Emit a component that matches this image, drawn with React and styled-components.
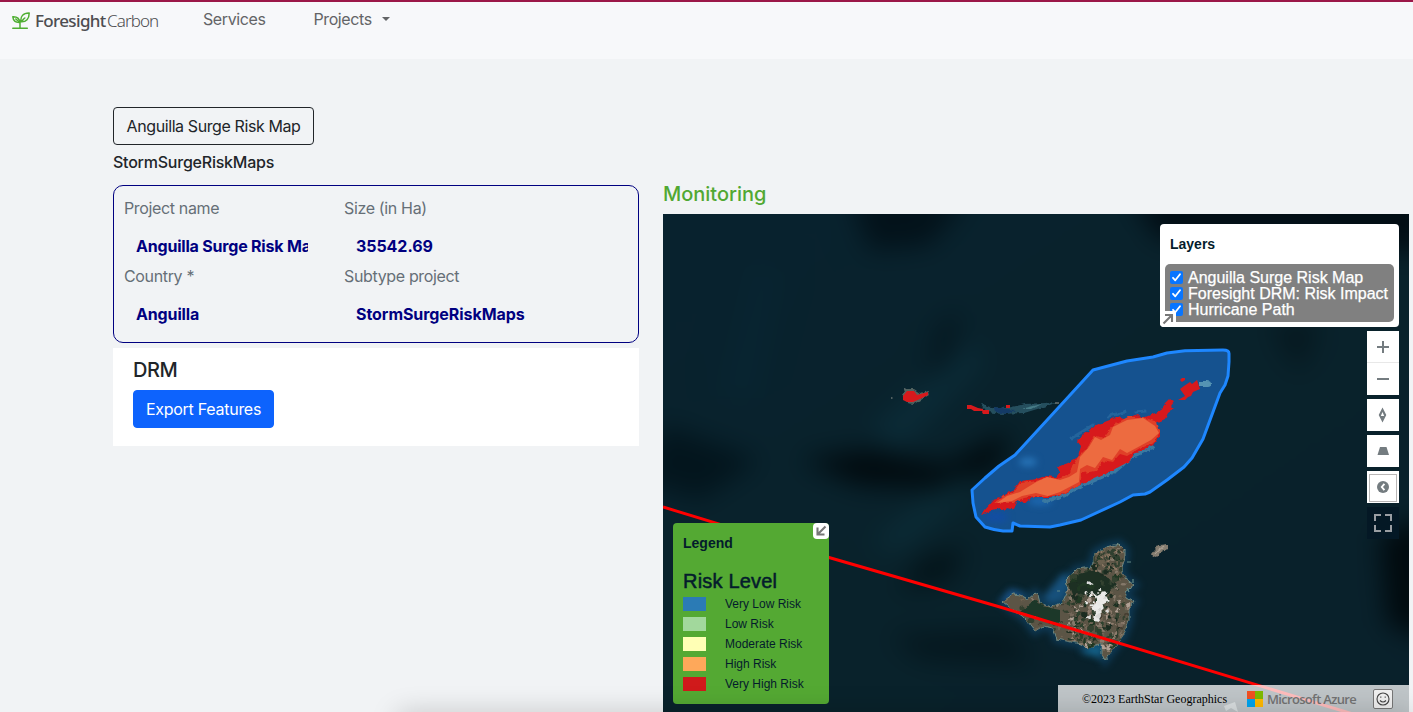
import React from "react";
import styled, { createGlobalStyle } from "styled-components";

const Global = createGlobalStyle`
  * { box-sizing: border-box; }
  html, body { margin: 0; height: 100%; overflow: hidden; }
  body {
    background: #f1f3f5;
    color: #212529;
    font: 400 16px/24px Inter, "Liberation Sans", sans-serif;
  }
`;

const Page = styled.div`
  position: relative;
  height: 712px;
  overflow: hidden;
`;

const Navbar = styled.header`
  display: flex;
  align-items: flex-start;
  height: 59px;
  border-top: 2px solid #9b1748;
  background: #f7f8fa;
  padding: 5px 12px 0;
`;

const Brand = styled.div`
  display: flex;
  align-items: center;
  width: 191px;
  height: 28px;
  font-family: "Noto Sans", sans-serif;
  font-size: 17px;
  color: #4d4d50;
`;

const BrandText = styled.span`
  display: inline-block;
  width: ${(p) => p.$w}px;
  margin-left: ${(p) => p.$ml}px;
  font-weight: ${(p) => p.$weight};
  letter-spacing: ${(p) => p.$ls}px;
  white-space: nowrap;
`;

const NavLink = styled.a`
  display: flex;
  align-items: center;
  margin-right: 48px;
  color: #636466;
  letter-spacing: -0.4px;
  white-space: nowrap;
`;

const Caret = styled.span`
  margin-left: 10px;
  border: 4px solid transparent;
  border-top-color: #636466;
  border-bottom: 0;
`;

const Main = styled.main`
  padding: 48px 4px 0 113px;
`;

const Button = styled.button`
  display: block;
  height: 38px;
  width: ${(p) => p.$w}px;
  padding: 0;
  border: 1px solid ${(p) => (p.$primary ? "#0d63fd" : "#212529")};
  border-radius: 4px;
  background: ${(p) => (p.$primary ? "#0d63fd" : "transparent")};
  color: ${(p) => (p.$primary ? "#fff" : "#212529")};
  font: inherit;
  letter-spacing: ${(p) => p.$ls}px;
  white-space: nowrap;
`;

const ProjectType = styled.div`
  margin-top: 5px;
  font-weight: 500;
  letter-spacing: -0.23px;
`;

const Columns = styled.div`
  display: flex;
  gap: 24px;
  align-items: flex-start;
  margin-top: 8px;
`;

const Left = styled.section`
  flex: 0 0 526px;
  padding-top: 3px;
`;

const Right = styled.section`
  flex: 1;
`;

const DetailCard = styled.div`
  display: grid;
  grid-template-columns: 220px 1fr;
  grid-auto-rows: 68px;
  height: 158px;
  padding: 10px;
  border: 1px solid #000080;
  border-radius: 10px;
`;

const Label = styled.div`
  color: #666f77;
  letter-spacing: -0.35px;
`;

const Value = styled.div`
  width: ${(p) => p.$w || 196}px;
  margin: 14px 0 0 12px;
  overflow: hidden;
  white-space: nowrap;
  color: #000080;
  font-weight: 700;
  letter-spacing: ${(p) => p.$ls}px;
`;

const DrmCard = styled.div`
  height: 98px;
  margin-top: 5px;
  padding: 10px 20px;
  background: #fff;
`;

const Heading = styled.h5`
  margin: 0 0 8px;
  font-size: 20px;
  line-height: 24px;
  font-weight: 500;
  letter-spacing: ${(p) => p.$ls}px;
  color: ${(p) => p.$color || "#212529"};
`;

const MapFrame = styled.div`
  position: relative;
  height: 498px;
  overflow: hidden;
  background: #08202b;
  font-family: "Liberation Sans", sans-serif;
`;

const Scene = styled.svg`
  display: block;
  width: 746px;
  height: 498px;

  filter { color-interpolation-filters: sRGB; }
`;

const LayersPanel = styled.div`
  position: absolute;
  top: 10px;
  right: 10px;
  width: 239px;
  height: 103px;
  padding: 10px 5px 5px;
  border-radius: 4px;
  background: #fff;
  color: #041c2c;
`;

const PanelTitle = styled.div`
  height: 30px;
  padding-left: 5px;
  font: 700 14px/20px "Liberation Sans", sans-serif;
`;

const LayerList = styled.div`
  height: 58px;
  padding: 5px;
  border-radius: 5px;
  background: #808080;
  color: #fff;
`;

const LayerRow = styled.label`
  display: flex;
  align-items: center;
  height: 16px;
  gap: 5px;
  font-size: 16px;
  line-height: 16px;
  white-space: nowrap;
`;

const LayerName = styled.span`
  padding-top: 2px;
  -webkit-text-stroke: 0.25px #fff;
`;

const CheckIcon = styled.svg`
  flex: none;
  width: 13px;
  height: 13px;
`;

const Toggle = styled.button`
  position: absolute;
  ${(p) => (p.$corner === "top" ? "top: 0; right: 0;" : "bottom: 0; left: 0;")}
  display: grid;
  place-items: center;
  width: 16px;
  height: 16px;
  padding: 0;
  border: 0;
  border-radius: ${(p) => (p.$corner === "top" ? "4px" : "0 0 0 4px")};
  background: #fff;
`;

const Controls = styled.div`
  position: absolute;
  top: 117px;
  right: 10px;
  display: flex;
  flex-direction: column;
  gap: 4px;
`;

const ControlGroup = styled.div`
  background: ${(p) => (p.$dark ? "#041825" : "#fff")};
`;

const Control = styled.button`
  display: block;
  width: 32px;
  height: 32px;
  padding: 0;
  border: 0;
  border-bottom: ${(p) => (p.$divided ? "1px solid #e8e8e8" : "0")};
  background: transparent;

  svg { display: block; width: 32px; height: 32px; }
`;

const Legend = styled.div`
  position: absolute;
  left: 10px;
  bottom: 8px;
  width: 156px;
  height: 181px;
  padding: 10px 5px;
  border-radius: 4px;
  background: #54a933;
  color: #041c2c;
`;

const LegendHeading = styled.div`
  margin: 6px 0 1px;
  padding-left: 5px;
  font-size: 20px;
  line-height: 24px;
  -webkit-text-stroke: 0.5px #041c2c;
  letter-spacing: 0.2px;
`;

const LegendRow = styled.div`
  display: flex;
  align-items: center;
  height: 20px;
  padding-left: 5px;
  font-size: 12px;
  line-height: 20px;
`;

const Swatch = styled.span`
  width: 23px;
  height: 14px;
  margin-right: 19px;
  background: ${(p) => p.$color};
`;

const Attribution = styled.div`
  position: absolute;
  right: 0;
  bottom: 0;
  display: flex;
  align-items: center;
  width: 351px;
  height: 27px;
  padding-left: 24px;
  background: rgba(255, 255, 255, 0.74);
`;

const Copyright = styled.span`
  width: 165px;
  font: 12px/16px "Liberation Serif", serif;
  color: #000;
  white-space: nowrap;
`;

const MsLogo = styled.span`
  display: grid;
  grid-template-columns: 8px 8px;
  grid-auto-rows: 8px;
  width: 16px;
`;

const Tile = styled.span`
  background: ${(p) => p.$color};
`;

const Azure = styled.span`
  width: 106px;
  margin-left: 4px;
  font: 600 13px/18px "Open Sans", sans-serif;
  letter-spacing: -0.68px;
  color: #737373;
  white-space: nowrap;
`;

const Smile = styled.span`
  display: grid;
  place-items: center;
  width: 20px;
  height: 20px;
  border: 1px solid #777;
  border-radius: 2px;
  background: #f0f0f0;
`;

const BottomShade = styled.div`
  position: absolute;
  left: 398px;
  right: 0;
  top: 712px;
  height: 20px;
  box-shadow: 0 2px 28px rgba(0, 0, 0, 0.22);
  pointer-events: none;
`;

function Sprout() {
  return (
    <svg width="18" height="18" viewBox="0 0 18 18" fill="none" stroke="#4fae32" strokeWidth="1.5" strokeLinecap="round" strokeLinejoin="round">
      <path d="M.8 16.2h14.5M8 16V10.5M8 10.5C3.8 10.7 1.2 8.7.8 4.7C4.5 4.5 7.4 6.5 8 10.5ZM9 9.8C8.2 4.5 11 .9 17.2 1C17.2 6.8 14.2 10.2 9 9.8ZM9.2 9.6c1.3-1 2-2.4 3.6-3.6" />
      <path d="M3.8 7l3.5 3" />
    </svg>
  );
}

function Check() {
  return (
    <CheckIcon viewBox="0 0 13 13">
      <rect width="13" height="13" rx="2" fill="#0875ff" />
      <path d="M3 6.8L5.3 9.3L10 3.2" fill="none" stroke="#fff" strokeWidth="1.8" strokeLinecap="round" strokeLinejoin="round" />
    </CheckIcon>
  );
}

function Arrow({ up }) {
  return (
    <svg width="12" height="12" viewBox="0 0 12 12" fill="none" stroke="#777" strokeWidth="2.1">
      <path d={up ? "M1.5 10.5L9.5 2.5M3 2H10V9" : "M10.5 1.5L3 9M2.5 2.5V9.5H9.5"} />
    </svg>
  );
}

const glyph = "#747c80";
const icons = {
  plus: <path d="M10 16H22M16 10V22" stroke={glyph} strokeWidth="2" />,
  minus: <path d="M10 16H22" stroke={glyph} strokeWidth="2" />,
  compass: <path fillRule="evenodd" fill={glyph} d="M15.5 8.5L19.3 16L15.5 23.5L11.7 16ZM15.5 13L13.8 17H17.2Z" />,
  pitch: <path fill={glyph} d="M13 12H19.5L22 20H10.5Z" />,
  style: (
    <g>
      <rect x="2.5" y="3.5" width="27" height="27" fill="none" stroke="#b8b6b6" />
      <circle cx="16" cy="16" r="6" fill={glyph} />
      <path d="M17.4 12.8L14.8 16L17.4 19.2" fill="none" stroke="#fff" strokeWidth="1.9" />
    </g>
  ),
  full: <path d="M8 14V8H14M18 8H24V14M24 18V24H18M14 24H8V18" fill="none" stroke="#9a9ea3" strokeWidth="2" />,
};

function MapControl({ icon, divided }) {
  return (
    <Control $divided={divided} aria-label={icon}>
      <svg viewBox="0 0 32 32">{icons[icon]}</svg>
    </Control>
  );
}

const area =
  "M1015 455L1093 370L1127 361L1153 357L1167 353L1185 350.7L1223 350Q1229 350 1229 353.5V362L1228 376L1225 385L1220 393L1203 439L1192 458L1184 467L1167 480L1150 492L1145 494L1133 495L1120 502L1081 520L1060 525L1050 527L1020 526L1013 523L1012 531H1003Q994 530 985 527L976 517L973 503L972 490L985 478L999 466Z";
const risk =
  "M981 515L984 510L993 500L1003 497L1007 493L1014 490L1020 481L1037 479L1045 476L1056 477L1060 472L1057 467L1068 463L1078 457L1081 446L1077 441L1084 434L1093 427L1107 421L1118 417L1124 419L1138 414L1143 418L1160 411L1165 404L1170 399L1174 402L1171 406L1174 409L1168 413L1165 419L1156 423L1160 430V436L1153 445L1140 452L1133 454L1130 461L1115 469L1096 478L1080 485L1060 496L1050 497L1033 497L1025 503L1018 500L1014 509L1007 507L1004 511L999 508L993 510L986 513Z";
const mid =
  "M993 503L1003 497L1014 491L1020 483L1037 481L1047 477L1058 479L1068 475L1078 457L1088 447L1094 435L1103 438L1113 425L1128 417L1143 417L1157 422L1160 432L1154 442L1140 448L1127 456L1120 454L1112 463L1103 461L1096 471L1082 473L1080 485L1060 495L1048 496L1036 496L1023 498L1014 503Z";
const core =
  "M997 503L1007 496L1020 492L1028 487L1038 481L1047 477L1060 480L1069 477L1077 472L1080 457L1089 447L1095 437L1101 440L1110 435L1113 427L1127 420L1143 418L1155 426L1159 433L1151 440L1140 446L1127 453L1120 449L1112 460L1103 457L1095 468L1087 465L1080 469L1079 482L1060 492L1048 496L1036 493L1022 496L1012 501Z";
const island =
  "M1003 602L1013 594L1020 595L1028 599L1035 593L1038 595L1040 603L1050 607L1062 603L1068 590L1066 580L1077 569L1092 567L1095 553L1106 547L1119 544L1125 550V558L1121 570L1125 578L1134 585L1125 592L1127 598L1134 602L1129 609L1129 620L1123 637L1114 648L1105 660L1101 653V643L1088 648L1076 643L1057 639L1053 628L1043 626L1035 631L1025 618L1012 609Z";

function patches(count, box, colors, size, seed) {
  let s = seed;
  const rnd = () => {
    s = (s * 16807) % 2147483647;
    return s / 2147483647;
  };
  return Array.from({ length: count }, (_, i) => (
    <ellipse
      key={i}
      cx={(box[0] + rnd() * box[2]).toFixed(1)}
      cy={(box[1] + rnd() * box[3]).toFixed(1)}
      rx={(0.7 + rnd() * size).toFixed(1)}
      ry={(0.7 + rnd() * size).toFixed(1)}
      fill={colors[Math.floor(rnd() * colors.length)]}
    />
  ));
}

function Satellite() {
  return (
    <Scene viewBox="663 214 746 498">
      <defs>
        <linearGradient id="sea" x1="0" y1="0" x2="1" y2="1">
          <stop offset="0" stopColor="#08222f" />
          <stop offset="0.5" stopColor="#09222b" />
          <stop offset="1" stopColor="#09202b" />
        </linearGradient>
        <filter id="soft" colorInterpolationFilters="sRGB" x="-10%" y="-10%" width="120%" height="120%"><feGaussianBlur stdDeviation="13" /></filter>
        <filter id="haze" colorInterpolationFilters="sRGB" x="-50%" y="-50%" width="200%" height="200%"><feGaussianBlur stdDeviation="3.5" /></filter>
        <filter id="fine" colorInterpolationFilters="sRGB" x="-20%" y="-20%" width="140%" height="140%"><feGaussianBlur stdDeviation="0.55" /></filter>
        <filter id="ragged" colorInterpolationFilters="sRGB" x="-20%" y="-20%" width="140%" height="140%">
          <feTurbulence type="fractalNoise" baseFrequency="0.2" numOctaves="2" seed="4" />
          <feDisplacementMap in="SourceGraphic" scale="4" xChannelSelector="R" yChannelSelector="G" />
        </filter>
        <clipPath id="land"><path d={island} /></clipPath>
      </defs>
      <rect x="663" y="214" width="746" height="498" fill="url(#sea)" />
      <g filter="url(#soft)">
        <rect x="620" y="170" width="830" height="590" fill="url(#sea)" />
        <path d="M850 194H970L930 245L870 250Z" fill="#03121a" />
        <path d="M1130 195H1429V255L1300 235L1160 240Z" fill="#020d14" />
        <path d="M940 325L960 310L945 380L925 390Z" fill="#04151d" />
        <path d="M800 460L870 450L945 465L1010 430L1000 465L950 488L860 485Z" fill="#010a0e" />
        <path d="M870 430L970 345L985 360L900 450Z" fill="#0b2b37" />
        <path d="M870 545L960 475L975 485L900 550Z" fill="#0b2c37" />
        <path d="M1380 535L1429 515V640L1388 625Z" fill="#010a0e" />
        <path d="M920 560L965 545L950 580L900 590Z" fill="#031217" />
        <path d="M890 635L1010 630L1035 665L920 660Z" fill="#05171e" />
        <path d="M1270 325L1320 320L1300 375Z" fill="#06181f" />
        <path d="M663 425L760 460L700 500L640 480Z" fill="#03151d" />
        <path d="M720 395L755 260L780 275L755 400Z" fill="#082431" />
      </g>

      <g filter="url(#fine)">
        <g filter="url(#ragged)">
          <path d="M902 395L906 389L914 389L920 393L928 390L929 395L921 400L914 404L907 403Z" fill="#52625f" />
          <path d="M981 404L986 405L991 407L1007 408L1025 404L1044 403L1058 402L1044 407L1024 413L1002 414L987 412Z" fill="#254f5e" />
          <path d="M994 407L1015 410L1007 414L995 412Z" fill="#143a66" />
          <path d="M1021 409L1042 404L1032 409Z" fill="#477c87" />
        </g>
        <path d="M891 398h1.5M904 389h1.5M1055 403h4" stroke="#6a7372" strokeWidth="1.4" />
      </g>
      <path d="M903 396L907 391H914L917 395L928 392V395L920 399L913 402H907L903 400Z" fill="#d7191c" />
      <path d="M967 406V405H971L978 408L983 409V411L980 411L974 411L971 409H967ZM1006 405H1010V408H1006ZM983 410H989V414H983L982 412Z" fill="#d7191c" />

      <path d={area} fill="#15528f" />
      <g filter="url(#haze)">
        <ellipse cx="1028" cy="462" rx="9" ry="4" fill="#2977bb" />
        <ellipse cx="996" cy="517" rx="12" ry="5" fill="#124da6" />
        <ellipse cx="1040" cy="501" rx="12" ry="4" fill="#1e69b2" />
      </g>
      <g filter="url(#fine)">
        <g filter="url(#ragged)" fill="none" strokeLinecap="round">
          <path d="M1045 501L1058 498L1081 486L1115 471L1133 456L1153 447" stroke="#3a79a1" strokeWidth="4" strokeDasharray="9 4 14 3" />
          <path d="M1109 416L1125 412M1136 412L1145 411M1072 438L1093 425" stroke="#23649c" strokeWidth="3" />
          <path d="M1201 384L1208 384" stroke="#5593b3" strokeWidth="6" />
        </g>
      </g>
      <g filter="url(#ragged)">
        <path d={risk} fill="#d7191c" />
        <path d={mid} fill="#e04028" />
      </g>
      <path d={core} fill="#ed6b40" />
      <path d="M1178 400L1185 396L1180 389L1184 386L1190 382L1192 384L1197 380L1198 383L1200 389L1193 392L1191 396L1188 397L1185 400H1178ZM1180 380L1182 378H1185V380L1182 382Z" fill="#d7191c" />
      <path d={area} fill="none" stroke="#1e87ff" strokeWidth="3" strokeLinejoin="round" />

      <path d={island} fill="#155b83" stroke="#11466c" strokeWidth="9" filter="url(#haze)" opacity="0.6" />
      <g filter="url(#haze)">
        <path d="M1042 598L1063 573L1072 579L1064 601L1050 605Z" fill="#17517c" />
        <path d="M1001 602L1010 589L1026 595L1012 606Z" fill="#184e80" />
        <path d="M1090 645L1103 644L1101 658L1080 652Z" fill="#146188" />
      </g>
      <g filter="url(#fine)">
        <g filter="url(#ragged)">
          <path d={island} fill="#5c5546" stroke="#718b83" strokeWidth="1" />
          <g clipPath="url(#land)">
            {patches(420, [1000, 545, 135, 114], ["#706351", "#5b5848", "#85796a", "#463f32", "#283a29", "#33402f"], 2.2, 71)}
            <path d="M1020 613L1034 600L1042 606L1055 609L1060 610L1060 622L1050 624L1039 618Z" fill="#1c3829" />
            <path d="M1075 575L1096 570L1116 584L1100 604L1086 594L1074 600L1068 584Z" fill="#1d3023" />
            {patches(110, [1068, 552, 52, 95], ["#203823", "#1b2c20", "#344331"], 3, 921)}
            {patches(210, [1068, 595, 62, 62], ["#8e7c6d", "#b0a094", "#5d5546", "#2d422e", "#75685a"], 1.7, 211)}
            {patches(70, [1096, 545, 30, 30], ["#8b7763", "#6a604e", "#304030"], 1.6, 507)}
          </g>
          <path d="M1092 592L1097 596L1104 592L1106 598L1109 601L1102 605L1104 610L1099 615L1100 622L1093 621L1096 613L1091 607L1096 603L1096 599Z" fill="#e9e9e6" />
          {patches(24, [1086, 590, 22, 30], ["#ececea", "#d8d8d5"], 1.5, 83)}
          <path d="M1087 582L1093 585" stroke="#ddd" strokeWidth="2" />
          <path d="M1151 555L1159 545L1168 544L1168 549L1158 555L1152 557Z" fill="#857d70" />
          <path d="M1155 553L1164 546" stroke="#aaa092" strokeWidth="1.5" />
        </g>
        <path d="M1127 562h4M1133 579v4M1127 588l2 4M1057 591h3" stroke="#628a85" strokeWidth="1.2" fill="none" />
      </g>
      <path d="M1224 706L1235 702L1238 712L1231 708L1226 711Z" fill="#71848a" filter="url(#fine)" />
      <path d="M663 507L829 557.5L1000 607L1409 731" fill="none" stroke="#ff0000" strokeWidth="3" />
    </Scene>
  );
}

const layers = ["Anguilla Surge Risk Map", "Foresight DRM: Risk Impact", "Hurricane Path"];

const risks = [
  ["Very Low Risk", "#2b7bb5"],
  ["Low Risk", "#a2d89c"],
  ["Moderate Risk", "#ffffb5"],
  ["High Risk", "#fea85a"],
  ["Very High Risk", "#d01a1b"],
];

export default function App() {
  return (
    <Page>
      <Global />
      <Navbar>
        <Brand>
          <Sprout />
          <BrandText $w={69} $ml={5} $weight={500} $ls={-0.65}>Foresight</BrandText>
          <BrandText $w={54} $ml={3} $weight={300} $ls={-0.9}>Carbon</BrandText>
        </Brand>
        <NavLink>Services</NavLink>
        <NavLink>Projects<Caret /></NavLink>
      </Navbar>
      <Main>
        <Button $w={201} $ls={-0.4}>Anguilla Surge Risk Map</Button>
        <ProjectType>StormSurgeRiskMaps</ProjectType>
        <Columns>
          <Left>
            <DetailCard>
              <div>
                <Label>Project name</Label>
                <Value $w={172} $ls={-0.2}>Anguilla Surge Risk Map</Value>
              </div>
              <div>
                <Label>Size (in Ha)</Label>
                <Value $ls={-0.06}>35542.69</Value>
              </div>
              <div>
                <Label>Country *</Label>
                <Value $ls={-0.15}>Anguilla</Value>
              </div>
              <div>
                <Label>Subtype project</Label>
                <Value $ls={-0.06}>StormSurgeRiskMaps</Value>
              </div>
            </DetailCard>
            <DrmCard>
              <Heading $ls={-0.4}>DRM</Heading>
              <Button $primary $w={141} $ls={-0.27}>Export Features</Button>
            </DrmCard>
          </Left>
          <Right>
            <Heading $ls={-0.02} $color="#51a832">Monitoring</Heading>
            <MapFrame>
              <Satellite />
              <LayersPanel>
                <PanelTitle>Layers</PanelTitle>
                <LayerList>
                  {layers.map((name) => (
                    <LayerRow key={name}><Check /><LayerName>{name}</LayerName></LayerRow>
                  ))}
                </LayerList>
                <Toggle $corner="bottom" aria-label="Collapse layers"><Arrow up /></Toggle>
              </LayersPanel>
              <Controls>
                <ControlGroup>
                  <MapControl icon="plus" divided />
                  <MapControl icon="minus" />
                </ControlGroup>
                <ControlGroup><MapControl icon="compass" /></ControlGroup>
                <ControlGroup><MapControl icon="pitch" /></ControlGroup>
                <ControlGroup><MapControl icon="style" /></ControlGroup>
                <ControlGroup $dark><MapControl icon="full" /></ControlGroup>
              </Controls>
              <Legend>
                <PanelTitle>Legend</PanelTitle>
                <LegendHeading>Risk Level</LegendHeading>
                {risks.map(([name, color]) => (
                  <LegendRow key={name}><Swatch $color={color} />{name}</LegendRow>
                ))}
                <Toggle $corner="top" aria-label="Collapse legend"><Arrow /></Toggle>
              </Legend>
              <Attribution>
                <Copyright>©2023 EarthStar Geographics</Copyright>
                <MsLogo>
                  <Tile $color="#f25022" /><Tile $color="#7fba00" />
                  <Tile $color="#00a4ef" /><Tile $color="#ffb900" />
                </MsLogo>
                <Azure>Microsoft Azure</Azure>
                <Smile>
                  <svg width="14" height="14" viewBox="0 0 14 14" fill="none" stroke="#444" strokeWidth="1.1">
                    <circle cx="7" cy="7" r="6" />
                    <path d="M4 8.5Q7 11.5 10 8.5M4.8 4.5v1.3M9.2 4.5v1.3" />
                  </svg>
                </Smile>
              </Attribution>
            </MapFrame>
          </Right>
        </Columns>
      </Main>
      <BottomShade />
    </Page>
  );
}
